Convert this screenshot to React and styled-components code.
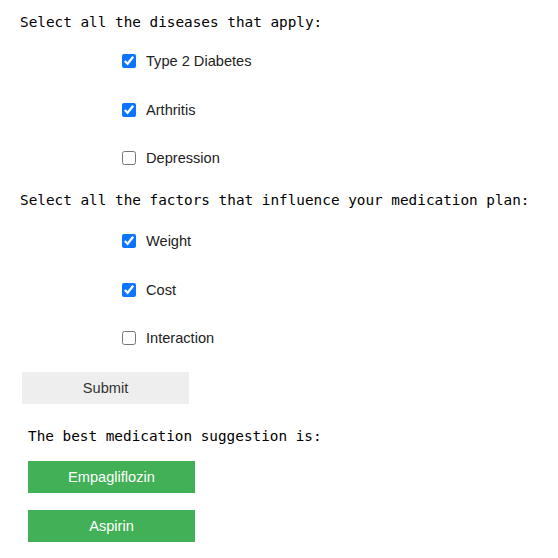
import React from 'react'
import styled, { createGlobalStyle } from 'styled-components'

const diseases = [
  { name: 'Type 2 Diabetes', checked: true },
  { name: 'Arthritis', checked: true },
  { name: 'Depression', checked: false }
]

const factors = [
  { name: 'Weight', checked: true },
  { name: 'Cost', checked: true },
  { name: 'Interaction', checked: false }
]

const suggestions = ['Empagliflozin', 'Aspirin']

const App = () => (
  <Page>
    <GlobalStyle />
    <Question>Select all the diseases that apply:</Question>
    <Options $top={21}>
      {diseases.map(d => (
        <Option key={d.name}>
          <Box type='checkbox' defaultChecked={d.checked} />
          {d.name}
        </Option>
      ))}
    </Options>
    <Question>Select all the factors that influence your medication plan:</Question>
    <Options $top={23}>
      {factors.map(f => (
        <Option key={f.name}>
          <Box type='checkbox' defaultChecked={f.checked} />
          {f.name}
        </Option>
      ))}
    </Options>
    <SubmitButton>Submit</SubmitButton>
    <Result>The best medication suggestion is:</Result>
    <Suggestions>
      {suggestions.map(s => (
        <Suggestion key={s}>{s}</Suggestion>
      ))}
    </Suggestions>
  </Page>
)

export default App

const GlobalStyle = createGlobalStyle`
  body {
    margin: 0;
    background: #fff;
  }
`
const Page = styled.div`
  display: flex;
  flex-direction: column;
  align-items: flex-start;
  padding: 14px 0 0 20px;
  font-family: 'Liberation Sans', Arial, sans-serif;
`
const Question = styled.div`
  font-family: 'DejaVu Sans Mono', monospace;
  font-size: 14.35px;
  line-height: 17px;
  color: #000;
`
const Options = styled.div`
  display: flex;
  flex-direction: column;
  padding: ${props => props.$top}px 0 25px 101px;
  gap: 30.5px;
`
const Option = styled.label`
  display: flex;
  align-items: center;
  height: 18px;
  font-size: 14.6px;
  color: #222;
`
const Box = styled.input`
  width: 14px;
  height: 14px;
  margin: 0 10px 0 1px;
  accent-color: #0b75ff;
`
const SubmitButton = styled.button`
  width: 167px;
  height: 32px;
  margin: 0 0 0 2px;
  border: none;
  background: #eeeeee;
  color: #333;
  font-family: 'Liberation Sans', Arial, sans-serif;
  font-size: 14.6px;
`
const Result = styled.div`
  margin: 24px 0 0 8px;
  font-family: 'DejaVu Sans Mono', monospace;
  font-size: 14.35px;
  line-height: 17px;
  color: #000;
`
const Suggestions = styled.div`
  display: flex;
  flex-direction: column;
  gap: 17px;
  margin: 16px 0 0 8px;
`
const Suggestion = styled.button`
  width: 167px;
  height: 32px;
  border: none;
  background: #42b056;
  color: #fff;
  font-family: 'Liberation Sans', Arial, sans-serif;
  font-size: 14.6px;
`
